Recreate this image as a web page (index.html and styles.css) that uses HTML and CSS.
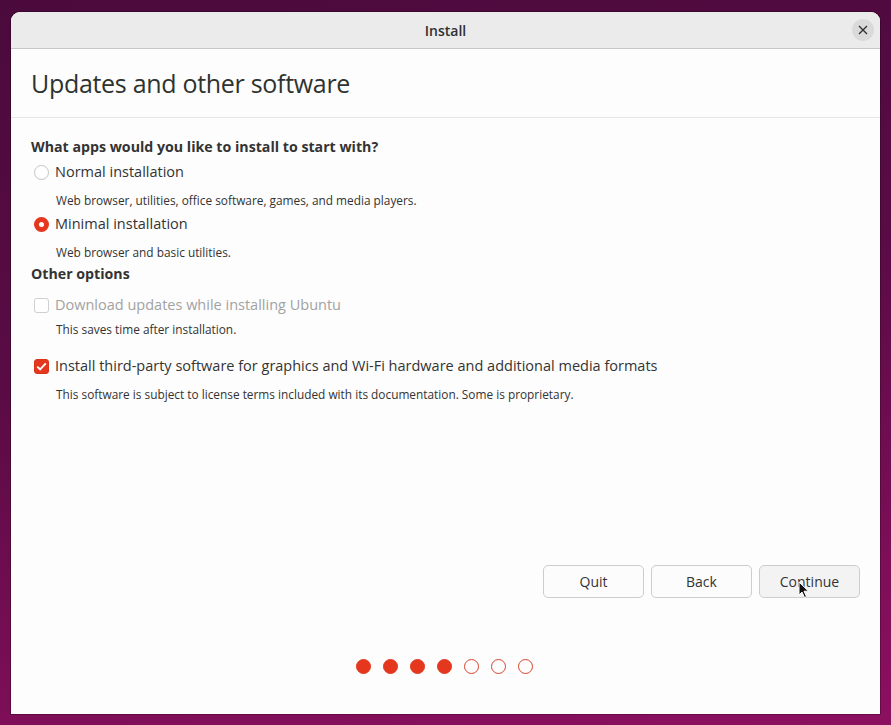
FILE: index.html
```html
<!DOCTYPE html>
<html lang="en">
<head>
    <meta charset="UTF-8">
    <meta name="viewport" content="width=device-width, initial-scale=1.0">
    <title>Install</title>
    <link rel="stylesheet" href="styles.css">
</head>
<body>
    <div class="window">
        <div class="titlebar">
            <span class="title">Install</span>
            <button class="close" aria-label="Close">
                <svg width="10" height="10" viewBox="0 0 10 10">
                    <path d="M1 1L9 9M9 1L1 9" stroke="#2e2e2e" stroke-width="1.3" />
                </svg>
            </button>
        </div>

        <div class="header">
            <h1>Updates and other software</h1>
        </div>

        <div class="content">
            <div class="question">What apps would you like to install to start with?</div>

            <label class="option first">
                <span class="radio"></span>
                Normal installation
            </label>
            <div class="desc">Web browser, utilities, office software, games, and media players.</div>

            <label class="option">
                <span class="radio checked"></span>
                Minimal installation
            </label>
            <div class="desc">Web browser and basic utilities.</div>

            <div class="question other">Other options</div>

            <label class="option check-first disabled">
                <span class="checkbox"></span>
                Download updates while installing Ubuntu
            </label>
            <div class="desc tight">This saves time after installation.</div>

            <label class="option check-second">
                <span class="checkbox checked">
                    <svg width="11" height="9" viewBox="0 0 11 9">
                        <path d="M1.2 4.6L4.1 7.3L9.8 1.4" fill="none" stroke="#fff" stroke-width="1.9" />
                    </svg>
                </span>
                Install third-party software for graphics and Wi-Fi hardware and additional media formats
            </label>
            <div class="desc">This software is subject to license terms included with its documentation. Some is proprietary.</div>

            <div class="actions">
                <button class="button">Quit</button>
                <button class="button">Back</button>
                <button class="button hover">
                    Continue
                    <svg class="cursor" width="12" height="18" viewBox="0 0 12 18">
                        <path d="M1 1L1 14L4 11L6.5 16.5L8.5 15.5L6 10.2L10.5 10.2Z" fill="#111" stroke="#fff" stroke-width="1" />
                    </svg>
                </button>
            </div>

            <div class="steps">
                <span class="dot done"></span>
                <span class="dot done"></span>
                <span class="dot done"></span>
                <span class="dot done"></span>
                <span class="dot"></span>
                <span class="dot"></span>
                <span class="dot"></span>
            </div>
        </div>
    </div>
</body>
</html>
```

FILE: styles.css
```css
html, body {
    height: 100%;
}

body {
    margin: 0;
    padding: 12px 11px 11px 11px;
    box-sizing: border-box;
    font-family: "Open Sans", "Noto Sans", sans-serif;
    color: #3a3a3a;
    background: linear-gradient(170deg, #4b0a3c 0%, #5a0b45 45%, #7c0e57 80%, #8c1060 100%);
}

.window {
    height: 100%;
    display: flex;
    flex-direction: column;
    background: #fdfdfd;
    border-radius: 9px 9px 0 0;
    overflow: hidden;
    box-shadow: 0 0 0 1px rgba(0, 0, 0, 0.25);
}

.titlebar {
    position: relative;
    height: 36px;
    flex-shrink: 0;
    display: flex;
    align-items: center;
    justify-content: center;
    background: #ebebeb;
    border-bottom: 1px solid #c6c6c6;
}

.title {
    font-size: 14px;
    font-weight: 600;
    color: #303030;
}

.close {
    position: absolute;
    right: 6px;
    top: 7px;
    width: 22px;
    height: 22px;
    padding: 0;
    border: none;
    border-radius: 50%;
    background: #dadada;
    display: flex;
    align-items: center;
    justify-content: center;
}

.header {
    height: 68px;
    flex-shrink: 0;
    display: flex;
    align-items: center;
    padding: 0 20px;
    border-bottom: 1px solid #e6e6e6;
}

.header h1 {
    margin: 0;
    font-size: 25px;
    font-weight: 400;
    letter-spacing: -0.3px;
    color: #2f332f;
}

.content {
    flex: 1;
    display: flex;
    flex-direction: column;
    padding: 19px 20px 0 20px;
}

.question {
    font-size: 14.2px;
    font-weight: 700;
    line-height: 20px;
    color: #333;
}

.question.other {
    margin-top: 2px;
}

.option {
    display: flex;
    align-items: center;
    gap: 6px;
    font-size: 14.5px;
    line-height: 24px;
    color: #333;
    margin-top: 2px;
    margin-left: 3px;
}

.option.first {
    margin-top: 3px;
}

.option.check-first {
    margin-top: 9px;
}

.option.check-second {
    margin-top: 15px;
}

.option.disabled {
    color: #a2a2a2;
}

.radio {
    width: 15px;
    height: 15px;
    box-sizing: border-box;
    border: 1px solid #c4c4c4;
    border-radius: 50%;
    background: #fff;
}

.radio.checked {
    border: 5px solid #e4371e;
    background: #fff;
}

.checkbox {
    width: 15px;
    height: 15px;
    box-sizing: border-box;
    border: 1px solid #cfcfcf;
    border-radius: 3px;
    background: #fff;
    display: flex;
    align-items: center;
    justify-content: center;
}

.checkbox.checked {
    border-color: #d9331c;
    background: #e4371e;
}

.desc {
    margin-left: 25px;
    margin-top: 6px;
    font-size: 11.85px;
    line-height: 20px;
    color: #333;
}

.desc.tight {
    margin-top: 2px;
}

.actions {
    margin-top: auto;
    display: flex;
    justify-content: flex-end;
    gap: 7px;
}

.button {
    position: relative;
    width: 101px;
    height: 33px;
    font-family: inherit;
    font-size: 14px;
    color: #333;
    background: #fcfcfc;
    border: 1px solid #cdcdcd;
    border-radius: 5px;
}

.button.hover {
    background: #f3f3f3;
}

.cursor {
    position: absolute;
    left: 38px;
    top: 15px;
}

.steps {
    display: flex;
    justify-content: center;
    gap: 12px;
    margin: 61px 0 40px 0;
    padding-right: 2px;
}

.dot {
    width: 15px;
    height: 15px;
    box-sizing: border-box;
    border-radius: 50%;
    border: 1px solid #d8432e;
}

.dot.done {
    background: #e4371e;
    border-color: #e4371e;
}
```
